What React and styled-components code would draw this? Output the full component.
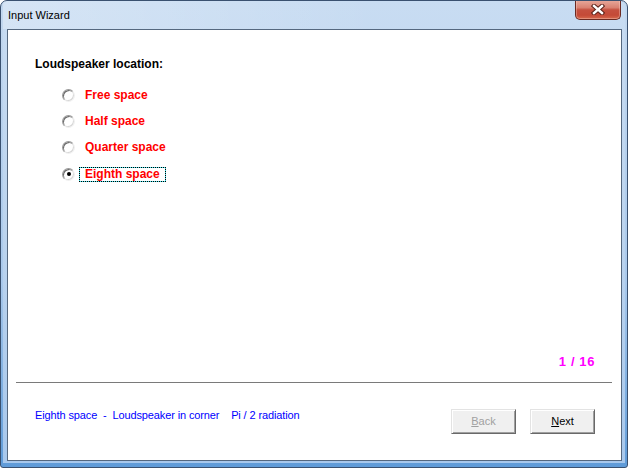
import React, { useState } from "react";
import styled, { createGlobalStyle } from "styled-components";

const GlobalStyle = createGlobalStyle`
  html, body {
    margin: 0;
    padding: 0;
    background: #fff;
  }
  body {
    font-family: "Liberation Sans", Arial, sans-serif;
  }
`;

const options = [
  { label: "Free space", info: "Free space  -  Loudspeaker in free field    4 Pi radiation" },
  { label: "Half space", info: "Half space  -  Loudspeaker in wall    2 Pi radiation" },
  { label: "Quarter space", info: "Quarter space  -  Loudspeaker at wall edge    Pi radiation" },
  { label: "Eighth space", info: "Eighth space  -  Loudspeaker in corner    Pi / 2 radiation" },
];

const Window = styled.div`
  box-sizing: border-box;
  width: 628px;
  height: 468px;
  display: flex;
  flex-direction: column;
  border: 1px solid #3a5170;
  border-radius: 7px 7px 3px 3px;
  padding: 0 2px 4px 2px;
  background: linear-gradient(to bottom, #c3d8ef 0%, #a9c9ec 60%, #5f9bd8 100%);
  overflow: hidden;
`;

const Frame = styled.div`
  flex: 1;
  display: flex;
  flex-direction: column;
  border-radius: 6px 6px 0 0;
  background: linear-gradient(to bottom, #c8dcf2 0%, #bcd4ee 50%, #a8c8ec 100%);
`;

const TitleBar = styled.div`
  height: 28px;
  display: flex;
  align-items: flex-start;
  padding-left: 5px;
  background: linear-gradient(to right, rgba(255, 255, 255, 0.25), rgba(255, 255, 255, 0) 60%);
`;

const Title = styled.span`
  font-size: 11px;
  line-height: 28px;
  color: #000;
`;

const CloseButton = styled.div`
  box-sizing: border-box;
  width: 46px;
  height: 20px;
  margin: -1px 4px 0 auto;
  display: flex;
  align-items: center;
  justify-content: center;
  padding-bottom: 1px;
  border: 1px solid #6b2a22;
  border-top: none;
  border-radius: 0 0 5px 5px;
  background: linear-gradient(
    to bottom,
    #e8aa9c 0%,
    #d98272 40%,
    #c5503f 52%,
    #c44a37 80%,
    #d6694d 100%
  );
  box-shadow: inset 0 0 0 1px rgba(255, 220, 210, 0.35);
`;

const Client = styled.div`
  flex: 1;
  display: flex;
  flex-direction: column;
  margin: 0 3px 2px 4px;
  background: #fff;
  border: 1px solid #55687f;
  min-height: 0;
`;

const Main = styled.div`
  flex: 1;
  min-height: 0;
  display: flex;
  flex-direction: column;
  padding: 26px 26px 0 27px;
`;

const Heading = styled.div`
  font-size: 12px;
  font-weight: bold;
  line-height: 16px;
  color: #000;
`;

const RadioList = styled.div`
  margin: 10px 0 0 27px;
  display: flex;
  flex-direction: column;
`;

const Option = styled.label`
  display: flex;
  align-items: center;
  height: 26.4px;
  cursor: default;
`;

const RadioMark = styled.span`
  box-sizing: border-box;
  width: 13px;
  height: 13px;
  margin-right: 4px;
  border-radius: 50%;
  border: 1px solid;
  border-color: #9a9a9a #f0f0f0 #f0f0f0 #9a9a9a;
  box-shadow: inset 1px 1px 0 #6a6a6a, inset -1px -1px 0 #d8d8d8;
  background: #fff;
  display: flex;
  align-items: center;
  justify-content: center;

  &::after {
    content: "";
    display: ${(p) => (p.$checked ? "block" : "none")};
    width: 4px;
    height: 4px;
    border-radius: 50%;
    background: #000;
  }
`;

const OptionText = styled.span`
  font-size: 12px;
  font-weight: bold;
  line-height: 13px;
  color: #ff0000;
  padding: 0 5px 0 5px;
  border: 1px ${(p) => (p.$focused ? "dotted #000" : "solid transparent")};
  background: ${(p) =>
    p.$focused
      ? "linear-gradient(#fff, #fff) padding-box, #48e4ec border-box"
      : "transparent"};
`;

const Counter = styled.div`
  margin-top: auto;
  margin-bottom: 12px;
  align-self: flex-end;
  font-size: 13px;
  font-weight: bold;
  line-height: 16px;
  letter-spacing: 0.6px;
  color: #ff00ff;
`;

const Separator = styled.div`
  height: 1px;
  margin: 0 9px 0 8px;
  background: #7a7a7a;
`;

const Footer = styled.div`
  display: flex;
  align-items: flex-start;
  padding: 26px 26px 26px 27px;
`;

const Status = styled.div`
  flex: 1;
  font-size: 11px;
  line-height: 13px;
  letter-spacing: -0.12px;
  white-space: pre;
  color: #0000ff;
`;

const Buttons = styled.div`
  display: flex;
  gap: 14px;
`;

const Button = styled.button`
  box-sizing: border-box;
  width: 65px;
  height: 25px;
  padding: 0;
  font-family: "Liberation Sans", Arial, sans-serif;
  font-size: 11px;
  line-height: 23px;
  color: ${(p) => (p.disabled ? "#a0a0a0" : "#000")};
  background: #f0f0f0;
  border: 1px solid;
  border-color: #e3e3e3 #696969 #696969 #e3e3e3;
  box-shadow: inset 1px 1px 0 #fff, inset -1px -1px 0 #a0a0a0;
  border-radius: 0;
`;

const CloseGlyph = () => (
  <svg width="14" height="11" viewBox="0 0 14 11">
    <path
      d="M3 2 L11 9 M11 2 L3 9"
      stroke="#5a2118"
      strokeWidth="4.4"
      strokeLinecap="square"
      fill="none"
    />
    <path
      d="M3 2 L11 9 M11 2 L3 9"
      stroke="#fff"
      strokeWidth="2.4"
      strokeLinecap="square"
      fill="none"
    />
  </svg>
);

export default function App() {
  const [selected, setSelected] = useState(3);

  return (
    <>
      <GlobalStyle />
      <Window>
        <Frame>
          <TitleBar>
            <Title>Input Wizard</Title>
            <CloseButton>
              <CloseGlyph />
            </CloseButton>
          </TitleBar>
          <Client>
            <Main>
              <Heading>Loudspeaker location:</Heading>
              <RadioList>
                {options.map((o, i) => (
                  <Option key={o.label} onClick={() => setSelected(i)}>
                    <RadioMark $checked={selected === i} />
                    <OptionText $focused={selected === i}>{o.label}</OptionText>
                  </Option>
                ))}
              </RadioList>
              <Counter>1 / 16</Counter>
            </Main>
            <Separator />
            <Footer>
              <Status>{options[selected].info}</Status>
              <Buttons>
                <Button disabled>
                  <u>B</u>ack
                </Button>
                <Button>
                  <u>N</u>ext
                </Button>
              </Buttons>
            </Footer>
          </Client>
        </Frame>
      </Window>
    </>
  );
}
